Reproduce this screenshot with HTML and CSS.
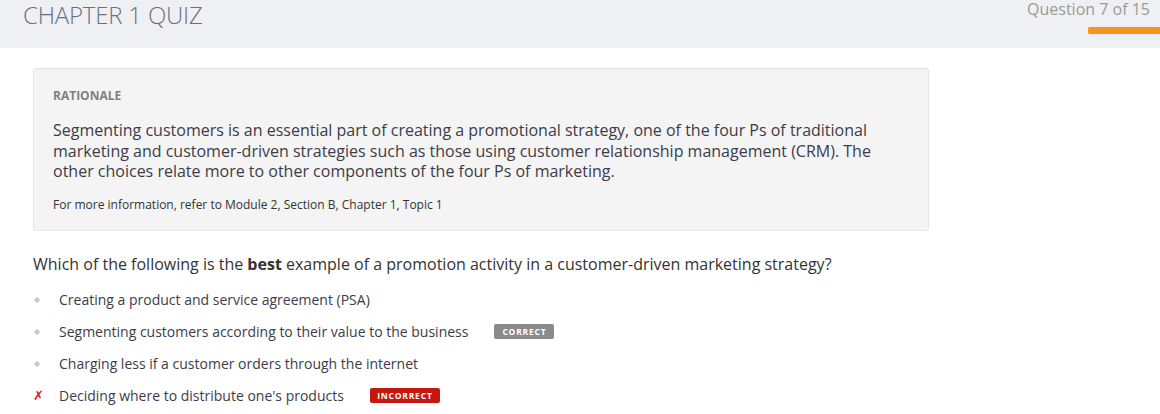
FILE: index.html
```html
<!DOCTYPE html>
<html>
<head>
<meta charset="utf-8">
<link rel="stylesheet" href="styles.css">
</head>
<body>
<header class="topbar">
  <h1 class="title">CHAPTER 1 QUIZ</h1>
  <div class="progress">
    <div class="progress-text">Question 7 of 15</div>
    <div class="progress-bar"></div>
  </div>
</header>
<main class="content">
  <section class="rationale">
    <div class="rationale-label">RATIONALE</div>
    <p class="rationale-text">Segmenting customers is an essential part of creating a promotional strategy, one of the four Ps of traditional marketing and customer-driven strategies such as those using customer relationship management (CRM). The other choices relate more to other components of the four Ps of marketing.</p>
    <p class="rationale-ref">For more information, refer to Module 2, Section B, Chapter 1, Topic 1</p>
  </section>
  <p class="question">Which of the following is the <b>best</b> example of a promotion activity in a customer-driven marketing strategy?</p>
  <ul class="options">
    <li class="option"><span class="marker"><span class="dot"></span></span><span class="opt-text">Creating a product and service agreement (PSA)</span></li>
    <li class="option"><span class="marker"><span class="dot"></span></span><span class="opt-text">Segmenting customers according to their value to the business</span><span class="badge badge-correct">CORRECT</span></li>
    <li class="option"><span class="marker"><span class="dot"></span></span><span class="opt-text">Charging less if a customer orders through the internet</span></li>
    <li class="option"><span class="marker cross">✗</span><span class="opt-text">Deciding where to distribute one's products</span><span class="badge badge-incorrect">INCORRECT</span></li>
  </ul>
</main>
</body>
</html>
```
FILE: styles.css
```css
* { box-sizing: border-box; }
html, body { margin: 0; padding: 0; }
body {
  font-family: "Open Sans", "Liberation Sans", sans-serif;
  color: #333;
  background: #fff;
  width: 1160px;
  overflow: hidden;
}
.topbar {
  background: #eff0f4;
  height: 48px;
  display: flex;
  justify-content: space-between;
  align-items: flex-start;
}
.title {
  margin: 0;
  padding-left: 23px;
  font-weight: 300;
  font-size: 24px;
  line-height: 30px;
  color: #6a7280;
  letter-spacing: -0.2px;
}
.progress {
  display: flex;
  flex-direction: column;
  align-items: flex-end;
}
.progress-text {
  font-size: 16px;
  line-height: 18px;
  color: #9a9a9a;
  padding-right: 10px;
}
.progress-bar {
  margin-top: 9px;
  width: 72px;
  height: 7px;
  background: #f7941d;
  border-radius: 2px 0 0 2px;
  box-shadow: 0 0 1px #d8d8d8;
}
.content {
  padding: 20px 0 0 33px;
}
.rationale {
  width: 896px;
  background: #f4f4f4;
  border: 1px solid #e4e4e4;
  border-radius: 3px;
  padding: 19px 20px 17px 19px;
}
.rationale-label {
  font-size: 12px;
  font-weight: 700;
  color: #808080;
  line-height: 16px;
}
.rationale-text {
  margin: 16px 0 0;
  font-size: 16px;
  line-height: 20.5px;
  color: #3c3c48;
}
.rationale-ref {
  margin: 15px 0 0;
  font-size: 12px;
  line-height: 16px;
  color: #333;
}
.question {
  margin: 22px 0 0;
  font-size: 16px;
  line-height: 22px;
  color: #333;
}
.question b { font-weight: 700; }
.options {
  list-style: none;
  margin: 15px 0 0;
  padding: 0;
  display: flex;
  flex-direction: column;
  gap: 12px;
}
.option {
  display: flex;
  align-items: center;
  height: 20px;
  font-size: 14px;
  color: #3c3c48;
}
.marker {
  width: 26px;
  display: flex;
  align-items: center;
  justify-content: flex-start;
  padding-left: 1px;
}
.dot {
  width: 4px;
  height: 4px;
  background: #c8c8c8;
  transform: rotate(45deg);
  margin-left: 1px;
  box-shadow: 0 0 1px #bbb;
}
.cross {
  color: #e8141e;
  font-size: 13px;
  font-weight: 700;
  font-style: italic;
  padding-left: 0;
  font-family: "DejaVu Sans", sans-serif;
}
.badge {
  display: inline-block;
  font-size: 8.5px;
  font-weight: 700;
  letter-spacing: 0.8px;
  color: #fff;
  border-radius: 2px;
  line-height: 15px;
  height: 15px;
  text-align: center;
  margin-left: 26px;
}
.badge-correct {
  background: #8a8a8a;
  width: 60px;
}
.badge-incorrect {
  background: #c4170f;
  width: 70px;
}
```
